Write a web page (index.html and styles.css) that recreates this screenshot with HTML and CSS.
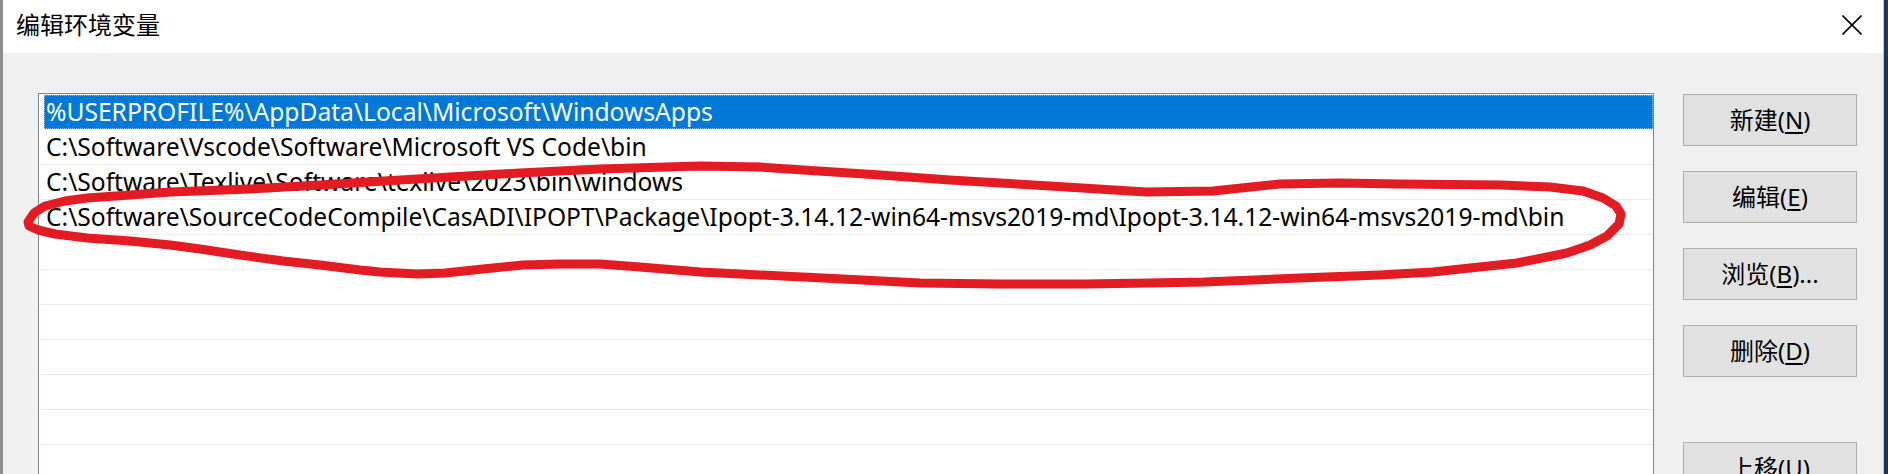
FILE: index.html
```html
<!DOCTYPE html>
<html lang="zh-CN">
<head>
<meta charset="utf-8">
<title>编辑环境变量</title>
<link rel="stylesheet" href="styles.css">
</head>
<body>
<div class="screen">
  <div class="edge-left"></div>
  <div class="window">
    <div class="titlebar">
      <span class="title">编辑环境变量</span>
      <svg class="close" width="20" height="20" viewBox="0 0 20 20" aria-label="关闭">
        <path d="M0.5 0.5 L19.5 19.5 M19.5 0.5 L0.5 19.5" stroke="#000" stroke-width="1.6" fill="none"/>
      </svg>
    </div>
    <div class="content">
      <div class="list">
        <div class="row sel"><div class="cell">%USERPROFILE%\AppData\Local\Microsoft\WindowsApps</div></div>
        <div class="row"><div class="cell">C:\Software\Vscode\Software\Microsoft VS Code\bin</div></div>
        <div class="row"><div class="cell">C:\Software\Texlive\Software\texlive\2023\bin\windows</div></div>
        <div class="row"><div class="cell">C:\Software\SourceCodeCompile\CasADI\IPOPT\Package\Ipopt-3.14.12-win64-msvs2019-md\Ipopt-3.14.12-win64-msvs2019-md\bin</div></div>
        <div class="row"><div class="cell"></div></div>
        <div class="row"><div class="cell"></div></div>
        <div class="row"><div class="cell"></div></div>
        <div class="row"><div class="cell"></div></div>
        <div class="row"><div class="cell"></div></div>
        <div class="row"><div class="cell"></div></div>
        <div class="row"><div class="cell"></div></div>
      </div>
      <div class="buttons">
        <button class="btn">新建(<u>N</u>)</button>
        <button class="btn">编辑(<u>E</u>)</button>
        <button class="btn">浏览(<u>B</u>)...</button>
        <button class="btn">删除(<u>D</u>)</button>
        <button class="btn btn-gap">上移(<u>U</u>)</button>
      </div>
    </div>
  </div>
  <div class="desk"></div>
  <svg class="annot" width="1888" height="474" viewBox="0 0 1888 474">
    <polyline fill="none" stroke="#e31b23" stroke-width="9" stroke-linejoin="round" stroke-linecap="round"
      points="28,222 34,213 45,206 65,201 87,198 130,195 170,192 250,189 320,185 384,181 450,177 520,173 600,169 700,166 760,167 803,170 880,175 950,180 1050,186 1146,192 1213,191 1280,184 1340,183 1400,184 1500,185 1550,187 1583,191 1603,198 1616,206 1621,214 1619,224 1607,236 1590,245 1567,253 1517,263 1470,268 1433,272 1380,275 1300,278 1204,282 1150,283 1084,284 1000,284 920,283 843,279 760,275 700,272 640,267 600,264 560,264 523,265 483,269 445,273 417,274 380,272 360,270 320,265 283,261 233,254 200,249 170,245 130,241 87,238 55,234 38,230 29,226 28,222"/>
  </svg>
</div>
</body>
</html>
```

FILE: styles.css
```css
html, body {
  margin: 0;
  padding: 0;
  height: 474px;
  overflow: hidden;
}

body {
  background: #1d3557;
}

.screen {
  position: relative;
  display: flex;
  width: 1888px;
  height: 474px;
}

.edge-left {
  width: 3px;
  background: #8d8d8d;
  flex: none;
}

.window {
  width: 1881px;
  flex: none;
  box-sizing: border-box;
  border-right: 1px solid #c9c9c9;
  background: #f0f0f0;
  display: flex;
  flex-direction: column;
}

.desk {
  flex: 1;
  background: #1d3557;
}

.titlebar {
  height: 53px;
  flex: none;
  background: #ffffff;
  display: flex;
  align-items: flex-start;
  justify-content: space-between;
}

.title {
  margin-top: 12px;
  margin-left: 13px;
  font-family: "Noto Sans CJK SC", sans-serif;
  font-size: 24px;
  line-height: 24px;
  color: #000;
}

.close {
  margin-top: 15px;
  margin-right: 21px;
  display: block;
}

.content {
  display: flex;
  padding: 40px 0 0 35px;
  gap: 29px;
}

.list {
  width: 1616px;
  height: 420px;
  box-sizing: border-box;
  border: 1px solid #828790;
  background: #ffffff;
  padding-top: 1px;
  flex: none;
}

.row {
  height: 35px;
  box-sizing: border-box;
  border-bottom: 1px solid #ececec;
  display: flex;
}

.cell {
  flex: 1;
  margin-left: 5px;
  padding-left: 2px;
  font-family: "Noto Sans", "Noto Sans CJK SC", sans-serif;
  font-size: 24.6px;
  line-height: 34px;
  white-space: nowrap;
  color: #000;
}

.row.sel .cell {
  background: #0078d7;
  color: #ffffff;
  outline: 1px dotted #8fc0ea;
  outline-offset: -1px;
}

.buttons {
  display: flex;
  flex-direction: column;
  gap: 25px;
  padding-top: 1px;
}

.btn {
  width: 174px;
  height: 52px;
  box-sizing: border-box;
  border: 1px solid #adadad;
  background: #e1e1e1;
  padding: 0;
  font-family: "Noto Sans", "Noto Sans CJK SC", sans-serif;
  font-size: 24px;
  line-height: 1;
  color: #000;
}

.btn u {
  text-underline-offset: 3px;
}

.btn-gap {
  margin-top: 40px;
}

.annot {
  position: absolute;
  top: 0;
  left: 0;
  pointer-events: none;
}
```
